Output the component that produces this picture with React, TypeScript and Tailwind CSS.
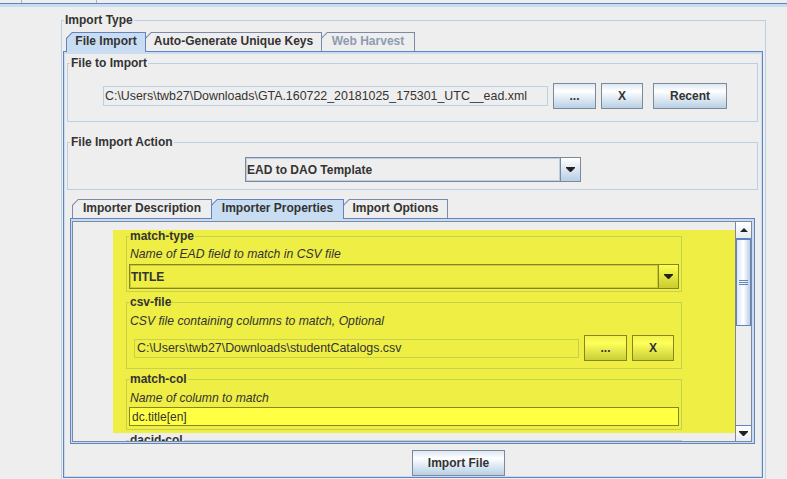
import React from "react";

type TabProps = { label: string; selected?: boolean; disabled?: boolean; className?: string };

const Tab = ({ label, selected, disabled, className = "" }: TabProps) => (
  <div
    className={`relative px-px pt-px [clip-path:polygon(6px_0,100%_0,100%_100%,0_100%,0_6px)] ${
      selected ? "z-10 -mb-px h-[20px] bg-[#6382bf]" : "h-[19px] bg-[#7a8aa8]"
    } ${className}`}
  >
    <div
      className={`flex h-full justify-center whitespace-nowrap pt-px font-bold [clip-path:polygon(5.4px_0,100%_0,100%_100%,0_100%,0_5.4px)] ${
        selected ? "bg-[#c8ddf2]" : "bg-[#eeeeee]"
      } ${disabled ? "text-[#8e9cb0]" : ""}`}
    >
      {label}
    </div>
  </div>
);

type TitledProps = { title: string; className?: string; border?: string; children?: React.ReactNode };

const Titled = ({ title, className = "", border = "border-[#b8cfe5]", children }: TitledProps) => (
  <fieldset className={`border ${border} ${className}`}>
    <legend className="ml-[2px] px-px font-bold">{title}</legend>
    {children}
  </fieldset>
);

const Btn = ({ label, className = "", yellow = false }: { label: string; className?: string; yellow?: boolean }) => (
  <button
    type="button"
    className={`flex h-[26px] shrink-0 items-center justify-center border font-bold ${
      yellow
        ? "border-[#86861c] bg-linear-to-b from-[#f2f250] via-[#ffff5a] via-30% to-[#c8cf38]"
        : "border-[#7a8a99] bg-linear-to-b from-[#dde8f3] via-white via-30% to-[#b8cfe5]"
    } ${className}`}
  >
    {label}
  </button>
);

const DownArrow = () => (
  <svg width="9" height="5" viewBox="0 0 9 5">
    <path d="M0 0h9v1L5 5H4L0 1z" fill="#222" />
  </svg>
);

const UpArrow = () => (
  <svg width="8" height="4" viewBox="0 0 8 4">
    <path d="M4 0L8 4H0z" fill="#222" />
  </svg>
);

const Combo = ({ value, yellow = false, className = "" }: { value: string; yellow?: boolean; className?: string }) => (
  <div className={`flex h-[25px] border ${yellow ? "border-[#86861c]" : "border-[#7a8a99]"} ${className}`}>
    <div
      className={`flex flex-1 items-center border font-bold ${
        yellow ? "border-[#caca3c] bg-[#eeee44]" : "border-[#b8cfe5] bg-[#eeeeee]"
      }`}
    >
      {value}
    </div>
    <div
      className={`flex w-[20px] items-center justify-center border-l ${
        yellow
          ? "border-[#86861c] bg-linear-to-b from-[#ffff50] to-[#c8cc30]"
          : "border-[#7a8a99] bg-linear-to-b from-white to-[#b8cfe5]"
      }`}
    >
      <DownArrow />
    </div>
  </div>
);

const Scrollbar = () => (
  <div className="flex w-[16px] flex-col border-l border-[#7a8a99] bg-[#eeeeee]">
    <div className="flex h-[17px] items-center justify-center border-b border-[#6382bf] bg-linear-to-b from-white to-[#e6edf5]">
      <UpArrow />
    </div>
    <div className="flex h-[87px] flex-col items-center justify-center gap-px border border-[#6382bf] bg-linear-to-r from-[#dde8f3] via-white to-[#b8cfe5]">
      <div className="h-px w-[9px] bg-[#6382bf]" />
      <div className="h-px w-[9px] bg-[#6382bf]" />
      <div className="h-px w-[9px] bg-[#6382bf]" />
    </div>
    <div className="flex-1" />
    <div className="flex h-[16px] items-center justify-center border-t border-[#6382bf] bg-linear-to-b from-white to-[#e6edf5]">
      <DownArrow />
    </div>
  </div>
);

export default function App() {
  return (
    <div className="h-[479px] w-[787px] overflow-hidden bg-[#eeeeee] font-['Liberation_Sans',Arial,sans-serif] text-[12px] leading-[14px] text-[#333333]">
      {/* bottom edge of the outer tab strip */}
      <div className="flex h-[3px]">
        <div className="ml-[21px] w-[76px] border-x border-[#a3b3c8]" />
      </div>
      <div className="h-px bg-[#6382bf]" />
      <div className="h-[3px] bg-[#c8ddf2]" />

      <Titled title="Import Type" className="ml-[61px] mt-[6px] h-[480px] w-[705px]">
        <div className="pl-px pt-[5px]">
          <div className="flex h-[19px] items-end pl-[3px]">
            <Tab label="File Import" selected className="w-[80px]" />
            <Tab label="Auto-Generate Unique Keys" className="-ml-px w-[177px]" />
            <Tab label="Web Harvest" disabled className="-ml-px w-[94px]" />
          </div>

          <div className="w-[700px] border border-[#6382bf]">
            <div className="border-x border-b border-t-2 border-[#c8ddf2]">
              <Titled title="File to Import" className="ml-[2px] mt-[2px] w-[691px]">
                <div className="flex items-center pb-[12px] pl-[35px] pt-[13px]">
                  <div className="flex h-[20px] w-[445px] items-center overflow-hidden whitespace-nowrap border border-[#b8cfe5] pl-px text-[12.4px]">
                    C:\Users\twb27\Downloads\GTA.160722_20181025_175301_UTC__ead.xml
                  </div>
                  <Btn label="..." className="ml-[5px] w-[43px]" />
                  <Btn label="X" className="ml-[5px] w-[42px]" />
                  <Btn label="Recent" className="ml-[10px] w-[74px]" />
                </div>
              </Titled>

              <Titled title="File Import Action" className="ml-[2px] mt-[13px] w-[691px]">
                <div className="flex pb-[7px] pl-[177px] pt-[8px]">
                  <Combo value="EAD to DAO Template" className="w-[336px]" />
                </div>
              </Titled>

              <div className="ml-[5px] mt-[9px] w-[685px]">
                <div className="flex h-[19px] items-end pl-[2px]">
                  <Tab label="Importer Description" className="w-[140px]" />
                  <Tab label="Importer Properties" selected className="-ml-px w-[133px]" />
                  <Tab label="Import Options" className="-ml-px w-[105px]" />
                </div>
                <div className="border border-[#6382bf]">
                  <div className="border-b border-l border-r-2 border-t-2 border-[#c8ddf2]">
                    <div className="flex h-[221px] border border-[#7a8a99]">
                      <div className="flex-1 overflow-hidden pt-[8px]">
                        <div className="ml-[40px] flex flex-col bg-[#eeee44] pb-[3px] pl-[13px] pr-[53px]">
                          <Titled title="match-type" border="border-[#c6d24a]" className="-mt-px w-[556px]">
                            <div className="mt-[4px] pl-[3px] text-[12.2px] italic">Name of EAD field to match in CSV file</div>
                            <Combo yellow value="TITLE" className="mx-[2px] mb-[2px] mt-[3px]" />
                          </Titled>

                          <Titled title="csv-file" border="border-[#c6d24a]" className="mt-[3px] w-[556px]">
                            <div className="mt-[5px] pl-[3px] text-[12.2px] italic">CSV file containing columns to match, Optional</div>
                            <div className="mb-[7px] mt-[7px] flex items-center justify-center">
                              <div className="flex h-[19px] w-[445px] items-center whitespace-nowrap border border-[#c6d24a] pl-[2px] text-[12.4px]">
                                C:\Users\twb27\Downloads\studentCatalogs.csv
                              </div>
                              <Btn yellow label="..." className="ml-[5px] w-[43px]" />
                              <Btn yellow label="X" className="ml-[5px] w-[42px]" />
                            </div>
                          </Titled>

                          <Titled title="match-col" border="border-[#c6d24a]" className="mt-[3px] w-[556px]">
                            <div className="mt-[5px] pl-[3px] text-[12.2px] italic">Name of column to match</div>
                            <div className="mx-[2px] mb-[3px] mt-[2px] flex h-[19px] items-center border border-[#86861c] bg-[#ffff44] pl-[2px]">
                              dc.title[en]
                            </div>
                          </Titled>
                        </div>

                        <Titled title="dacid-col" className="ml-[53px] w-[556px]" />
                      </div>
                      <Scrollbar />
                    </div>
                  </div>
                </div>
              </div>

              <Btn label="Import File" className="ml-[347px] mt-[6px] w-[93px]" />
            </div>
          </div>
        </div>
      </Titled>
    </div>
  );
}
